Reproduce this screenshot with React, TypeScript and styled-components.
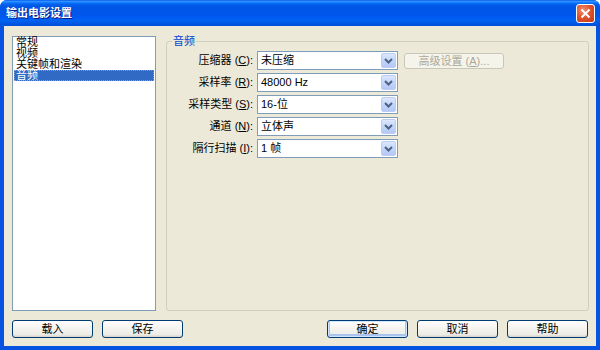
import { Fragment } from 'react';
import styled, { createGlobalStyle } from 'styled-components';

const Colors = {
	face: '#ECE9D8',
	frame: '#0553E0',
	field: '#7F9DB9',
	group: '#D0D0BF',
	groupTitle: '#0046D5',
	selection: '#316AC5',
	button: '#003C74',
	disabled: '#ACA899',
	disabledBorder: '#C9C7BA',
} as const;

const FONT = `"Liberation Sans", "Noto Sans CJK SC", sans-serif`;

const GlobalStyle = createGlobalStyle`
	html, body {
		margin: 0;
		background: #fff;
	}
	body {
		font-family: ${FONT};
		font-size: 11px;
	}
	* {
		box-sizing: border-box;
	}
`;

const Window = styled.div`
	width: 600px;
	height: 350px;
	display: flex;
	flex-direction: column;
	border-radius: 7px 7px 0 0;
	overflow: hidden;
	background: ${Colors.frame};
`;

const TitleBar = styled.div`
	height: 26px;
	flex: none;
	display: flex;
	align-items: center;
	justify-content: space-between;
	padding: 0 5px 0 6px;
	background: linear-gradient(
		to bottom,
		#0058ee 0%,
		#3593ff 5%,
		#127dff 10%,
		#0262ee 16%,
		#0057e5 24%,
		#0055eb 56%,
		#005bf5 68%,
		#0262f0 80%,
		#0055e0 92%,
		#0050d8 100%
	);
`;

const Title = styled.span`
	color: #fff;
	font-weight: bold;
	font-size: 11px;
	line-height: 13px;
	text-shadow: 1px 1px 0 #0a1883;
`;

const CloseButton = styled.div`
	width: 19px;
	height: 19px;
	display: flex;
	align-items: center;
	justify-content: center;
	border: 1px solid #fff;
	border-radius: 3px;
	background: radial-gradient(circle at 35% 30%, #f0906f 0%, #e0542f 45%, #c23b16 100%);
`;

const Client = styled.div`
	flex: 1;
	display: flex;
	flex-direction: column;
	margin: 0 4px 4px;
	padding: 10px 7px 8px 8px;
	background: ${Colors.face};
`;

const Main = styled.div`
	flex: 1;
	display: flex;
	gap: 10px;
	min-height: 0;
`;

const ListBox = styled.div`
	width: 144px;
	flex: none;
	background: #fff;
	border: 1px solid ${Colors.field};
`;

const ListItem = styled.div<{ $selected?: boolean }>`
	height: 11px;
	line-height: 11px;
	font-size: 11px;
	padding-left: 2px;
	margin: 0 1px;
	white-space: nowrap;
	color: ${({ $selected }) => ($selected ? '#fff' : '#000')};
	background: ${({ $selected }) => ($selected ? Colors.selection : 'transparent')};
	outline: ${({ $selected }) => ($selected ? '1px dotted #8a9bc0' : 'none')};
	outline-offset: -1px;
`;

const GroupBox = styled.fieldset`
	flex: 1;
	min-width: 0;
	margin: 0;
	padding: 4px 6px 0 5px;
	border: 1px solid ${Colors.group};
	border-radius: 3px;
`;

const Legend = styled.legend`
	padding: 0 1px;
	color: ${Colors.groupTitle};
	font-size: 11px;
	line-height: 11px;
`;

const Form = styled.div`
	display: grid;
	grid-template-columns: 81px 141px 102px;
	grid-auto-rows: 19px;
	column-gap: 4px;
	row-gap: 3px;
`;

const Label = styled.label`
	grid-column: 1;
	text-align: right;
	line-height: 19px;
	font-size: 11px;
	white-space: nowrap;
	color: #000;
`;

const Combo = styled.div`
	grid-column: 2;
	display: flex;
	border: 1px solid ${Colors.field};
	background: #fff;
`;

const ComboText = styled.span`
	flex: 1;
	padding-left: 3px;
	font-size: 11px;
	line-height: 17px;
	white-space: nowrap;
`;

const ComboArrow = styled.span`
	width: 15px;
	margin: 1px;
	display: flex;
	align-items: center;
	justify-content: center;
	border: 1px solid #bccdf4;
	border-radius: 2px;
	background: linear-gradient(to bottom, #dce7fd 0%, #c3d5fb 50%, #b4c8f6 100%);
`;

const AdvancedButton = styled.div`
	grid-column: 3;
	align-self: center;
	justify-self: end;
	width: 100px;
	height: 16px;
	border: 1px solid ${Colors.disabledBorder};
	border-radius: 3px;
	background: #f5f4ea;
	color: ${Colors.disabled};
	font-size: 11px;
	line-height: 14px;
	text-align: center;
	white-space: nowrap;
`;

const ButtonBar = styled.div`
	display: flex;
	justify-content: space-between;
	margin-top: 9px;
	padding-right: 1px;
`;

const ButtonGroup = styled.div`
	display: flex;
	gap: 9px;
`;

const Button = styled.div<{ $isDefault?: boolean }>`
	width: 81px;
	height: 18px;
	border: 1px solid ${Colors.button};
	border-radius: 3px;
	background: linear-gradient(to bottom, #ffffff 0%, #f4f3ee 50%, #ecebe6 85%, #d6d0c5 100%);
	box-shadow: ${({ $isDefault }) =>
		$isDefault ? 'inset 0 0 0 1px #cee7ff, inset 0 -1px 0 2px #a9c4ef' : 'none'};
	font-size: 11px;
	line-height: 16px;
	text-align: center;
	color: #000;
`;

const Chevron = () => (
	<svg width="9" height="6" viewBox="0 0 9 6">
		<path d="M1 1 L4.5 4.5 L8 1" fill="none" stroke="#4d6185" strokeWidth="2" />
	</svg>
);

const CloseIcon = () => (
	<svg width="11" height="11" viewBox="0 0 11 11">
		<path d="M1.5 1.5 L9.5 9.5 M9.5 1.5 L1.5 9.5" stroke="#fff" strokeWidth="2" />
	</svg>
);

const pages = ['常规', '视频', '关键帧和渲染', '音频'];

const fields = [
	{ label: '压缩器', key: 'C', value: '未压缩' },
	{ label: '采样率', key: 'R', value: '48000 Hz' },
	{ label: '采样类型', key: 'S', value: '16-位' },
	{ label: '通道', key: 'N', value: '立体声' },
	{ label: '隔行扫描', key: 'I', value: '1 帧' },
];

export default function App() {
	return (
		<>
			<GlobalStyle />
			<Window>
				<TitleBar>
					<Title>输出电影设置</Title>
					<CloseButton>
						<CloseIcon />
					</CloseButton>
				</TitleBar>
				<Client>
					<Main>
						<ListBox>
							{pages.map((page) => (
								<ListItem key={page} $selected={page === '音频'}>
									{page}
								</ListItem>
							))}
						</ListBox>
						<GroupBox>
							<Legend>音频</Legend>
							<Form>
								{fields.map((field, i) => (
									<Fragment key={field.key}>
										<Label>
											{field.label} (<u>{field.key}</u>):
										</Label>
										<Combo>
											<ComboText>{field.value}</ComboText>
											<ComboArrow>
												<Chevron />
											</ComboArrow>
										</Combo>
										{i === 0 && (
											<AdvancedButton>
												高级设置 (<u>A</u>)...
											</AdvancedButton>
										)}
									</Fragment>
								))}
							</Form>
						</GroupBox>
					</Main>
					<ButtonBar>
						<ButtonGroup>
							<Button>载入</Button>
							<Button>保存</Button>
						</ButtonGroup>
						<ButtonGroup>
							<Button $isDefault>确定</Button>
							<Button>取消</Button>
							<Button>帮助</Button>
						</ButtonGroup>
					</ButtonBar>
				</Client>
			</Window>
		</>
	);
}
